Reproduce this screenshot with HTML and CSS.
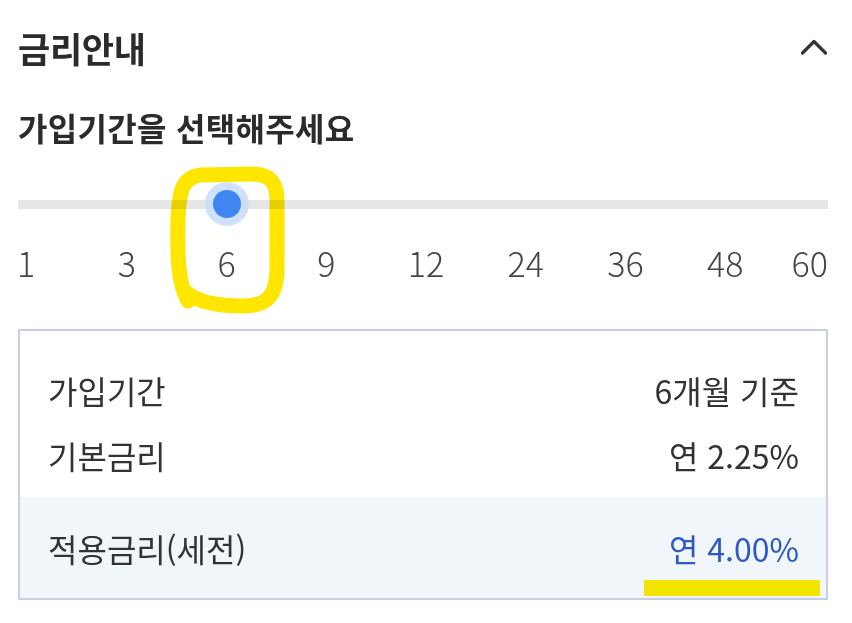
FILE: index.html
```html
<!DOCTYPE html>
<html lang="ko">
<head>
<meta charset="utf-8">
<title>금리안내</title>
<link rel="stylesheet" href="styles.css">
</head>
<body>
<div class="page">
  <header class="header">
    <h1 class="title">금리안내</h1>
    <svg class="chevron" width="28" height="18" viewBox="0 0 28 18" aria-hidden="true">
      <path d="M2.5 15 L14 3.5 L25.5 15" fill="none" stroke="#333" stroke-width="3.2" stroke-linecap="round" stroke-linejoin="round"/>
    </svg>
  </header>

  <h2 class="subtitle">가입기간을 선택해주세요</h2>

  <div class="slider">
    <div class="track"></div>
    <div class="thumb"><div class="thumb-dot"></div></div>
  </div>

  <div class="ticks">
    <span class="tick"><span>1</span></span>
    <span class="tick"><span>3</span></span>
    <span class="tick"><span>6</span></span>
    <span class="tick"><span>9</span></span>
    <span class="tick"><span>12</span></span>
    <span class="tick"><span>24</span></span>
    <span class="tick"><span>36</span></span>
    <span class="tick"><span>48</span></span>
    <span class="tick"><span>60</span></span>
  </div>

  <div class="rate-box">
    <div class="rate-top">
      <div class="row"><span class="label">가입기간</span><span class="value">6개월 기준</span></div>
      <div class="row"><span class="label">기본금리</span><span class="value">연 2.25%</span></div>
    </div>
    <div class="rate-bottom">
      <div class="row"><span class="label">적용금리(세전)</span><span class="value value-blue">연 4.00%</span></div>
    </div>
  </div>

  <svg class="marks" width="852" height="623" viewBox="0 0 852 623" aria-hidden="true">
    <path d="M188 301 C178 284 177 254 178 218 C179 192 182 177 201 175 L251 174 C270 174 277 182 277 201 L277 268 C277 296 267 306 243 306 C217 306 197 302 186 292" fill="none" stroke="#ffe600" stroke-width="15" stroke-linecap="round" stroke-linejoin="round"/>
  </svg>
  <svg class="underline-mark" width="852" height="623" viewBox="0 0 852 623" aria-hidden="true">
    <rect x="644" y="580" width="176" height="16" fill="#f3e500"/>
  </svg>
</div>
</body>
</html>
```

FILE: styles.css
```css
* { box-sizing: border-box; }

html, body {
  margin: 0;
  padding: 0;
  background: #ffffff;
}

body {
  font-family: "Noto Sans CJK KR", "Noto Sans", sans-serif;
  color: #333333;
}

.page {
  position: relative;
  width: 852px;
  height: 623px;
  padding: 28px 24px 0 18px;
  overflow: hidden;
}

.header {
  display: flex;
  justify-content: space-between;
  align-items: center;
  height: 40px;
}

.title {
  margin: 0;
  font-size: 35px;
  line-height: 40px;
  font-weight: 700;
  color: #2b2b2b;
  letter-spacing: -0.3px;
}

.chevron {
  display: block;
  margin-top: -2px;
}

.subtitle {
  margin: 39px 0 0;
  font-size: 32px;
  line-height: 40px;
  font-weight: 700;
  color: #2b2b2b;
  letter-spacing: 0.3px;
}

.slider {
  position: relative;
  margin-top: 35px;
  height: 44px;
  display: flex;
  align-items: center;
}

.track {
  flex: 1;
  height: 9px;
  background: #e6e6e6;
}

.thumb {
  position: absolute;
  top: 0;
  left: calc(9px + (100% - 12px) * 2 / 8 - 22px);
  width: 44px;
  height: 44px;
  border-radius: 50%;
  background: rgba(200, 221, 250, 0.85);
  display: flex;
  align-items: center;
  justify-content: center;
}

.thumb-dot {
  width: 28px;
  height: 28px;
  border-radius: 50%;
  background: #3f86f0;
}

.ticks {
  display: flex;
  justify-content: space-between;
  margin-top: 17px;
  padding: 0 3px 0 9px;
  height: 40px;
  font-size: 34px;
  line-height: 40px;
  font-weight: 300;
  color: #444444;
}

.tick {
  width: 0;
  display: flex;
  justify-content: center;
  white-space: nowrap;
}

.tick:first-child {
  justify-content: flex-start;
}

.tick:first-child > span {
  margin-left: -10px;
}

.tick:last-child {
  justify-content: flex-end;
}

.tick:last-child > span {
  margin-right: -3px;
}

.rate-box {
  margin-top: 46px;
  border: 2px solid #c6d0e2;
  font-size: 32px;
  line-height: 40px;
  color: #333333;
}

.rate-top {
  padding: 39px 27px 22px 28px;
  display: flex;
  flex-direction: column;
  gap: 25px;
  background: #ffffff;
}

.rate-bottom {
  padding: 31px 27px 30px 28px;
  background: #f1f6fb;
}

.row {
  display: flex;
  justify-content: space-between;
  align-items: center;
}

.value-blue {
  color: #2d59c4;
}

.marks {
  position: absolute;
  top: 0;
  left: 0;
  pointer-events: none;
  mix-blend-mode: multiply;
}

.underline-mark {
  position: absolute;
  top: 0;
  left: 0;
  pointer-events: none;
}
```
